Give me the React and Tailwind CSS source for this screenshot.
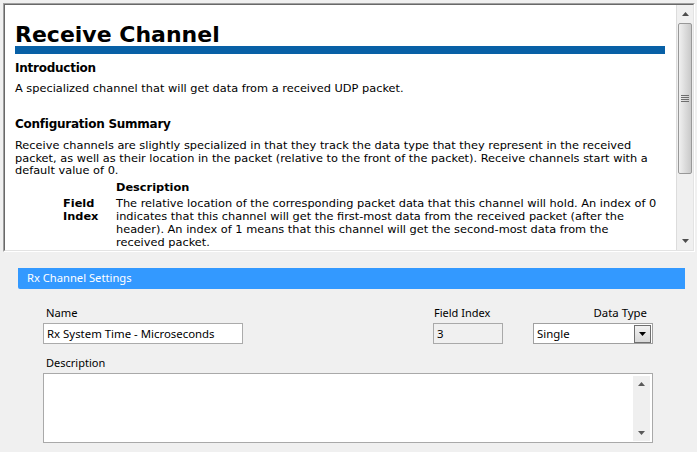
import React from 'react';

const HELP_FONT = { fontFamily: '"DejaVu Sans", Verdana, sans-serif' };
const UI_FONT = { fontFamily: '"Noto Sans", "Open Sans", sans-serif' };

const Arrow = ({ down = false, color = '#4d4d4d' }) => (
  <svg width="7" height="4" viewBox="0 0 7 4" aria-hidden="true">
    <polygon points={down ? '0,0 7,0 3.5,4' : '0,4 7,4 3.5,0'} fill={color} />
  </svg>
);

const HelpScrollbar = () => (
  <div className="flex w-[17px] flex-col border-l border-[#dcdcdc] bg-[#f0f0f0]">
    <div className="flex h-[18px] items-center justify-center">
      <Arrow />
    </div>
    <div className="mx-[1px] flex h-[151px] items-center justify-center rounded-[2px] border border-[#989898] bg-linear-to-r from-[#f0f0f0] to-[#c9c9c9]">
      <div className="flex flex-col gap-[1px]">
        <div className="h-px w-[8px] bg-[#6e6e6e]" />
        <div className="h-px w-[8px] bg-[#6e6e6e]" />
        <div className="h-px w-[8px] bg-[#6e6e6e]" />
        <div className="h-px w-[8px] bg-[#6e6e6e]" />
      </div>
    </div>
    <div className="flex-1" />
    <div className="flex h-[18px] items-center justify-center">
      <Arrow down />
    </div>
  </div>
);

const HelpPanel = () => (
  <div className="ml-[3px] mt-[3px] h-[249px] w-[692px] border border-[#a0a0a0] border-b-white border-r-white">
    <div className="flex h-full border border-[#696969] border-b-[#e3e3e3] border-r-[#e3e3e3]">
      <div className="flex-1 overflow-hidden bg-white pl-[10px] pr-[11px] pt-[18px] text-black" style={HELP_FONT}>
        <h1 className="text-[22px] font-bold leading-[23px]">Receive Channel</h1>
        <div className="h-[8px] w-full bg-[#0860a6]" />

        <h2 className="mt-[6px] text-[12px] font-bold leading-[16px] tracking-[-0.25px]">Introduction</h2>
        <p className="mt-[6px] whitespace-nowrap text-[11.35px] leading-[13px]">
          A specialized channel that will get data from a received UDP packet.
        </p>

        <h2 className="mt-[21px] text-[12px] font-bold leading-[16px] tracking-[-0.25px]">Configuration Summary</h2>
        <p className="mt-[7px] whitespace-nowrap text-[11.35px] leading-[12.5px]">
          Receive channels are slightly specialized in that they track the data type that they represent in the received
          <br />
          packet, as well as their location in the packet (relative to the front of the packet). Receive channels start with a
          <br />
          default value of 0.
        </p>

        <div className="mt-[4px] pl-[101px] text-[11.35px] font-bold leading-[13px]">Description</div>
        <div className="mt-[3px] flex text-[11.35px] leading-[13px]">
          <div className="w-[101px] shrink-0 pl-[48px] font-bold">
            Field
            <br />
            Index
          </div>
          <div className="whitespace-nowrap">
            The relative location of the corresponding packet data that this channel will hold. An index of 0
            <br />
            indicates that this channel will get the first-most data from the received packet (after the
            <br />
            header). An index of 1 means that this channel will get the second-most data from the
            <br />
            received packet.
          </div>
        </div>
      </div>
      <HelpScrollbar />
    </div>
  </div>
);

const SettingsPanel = () => (
  <div className="ml-[18px] mt-[16px] text-black" style={UI_FONT}>
    <div className="flex h-[21px] w-[667px] items-center rounded-bl-[2px] bg-[#3399ff] pl-[9px] text-[11.2px] text-white">
      Rx Channel Settings
    </div>

    <div className="ml-[25px] mt-[16px] flex items-end">
      <div className="w-[200px]">
        <div className="pl-[3px] text-[11.2px] leading-[15px]">Name</div>
        <div className="mt-[3px] h-[21px] border border-[#ababab] bg-white pl-[3px] text-[11.4px] leading-[19px]">
          Rx System Time - Microseconds
        </div>
      </div>
      <div className="ml-[190px] w-[70px]">
        <div className="pl-[1px] text-[11px] leading-[15px]">Field Index</div>
        <div className="mt-[3px] h-[21px] border border-[#a9a9a9] bg-[#f0f0f0] pl-[3px] text-[11.4px] leading-[19px]">
          3
        </div>
      </div>
      <div className="ml-[30px] w-[120px]">
        <div className="pr-[6px] text-right text-[11.4px] leading-[15px]">Data Type</div>
        <div className="mt-[3px] flex h-[21px] items-center justify-between border border-[#a0a0a0] bg-white pl-[3px] pr-[1px] text-[11.4px] leading-[19px]">
          <span>Single</span>
          <div className="flex h-[18px] w-[17px] items-center justify-center border border-[#6f6f6f] bg-linear-to-b from-[#f2f2f2] to-[#d8d8d8]">
            <Arrow down color="#000" />
          </div>
        </div>
      </div>
    </div>

    <div className="ml-[25px] mt-[11px]">
      <div className="pl-[3px] text-[11px] leading-[15px]">Description</div>
      <div className="mt-[3px] flex h-[70px] w-[610px] justify-end border border-[#a9a9a9] bg-white pb-[1px] pr-[2px] pt-[2px]">
        <div className="flex w-[17px] flex-col items-center justify-between bg-[#efefef] py-[6px]">
          <Arrow color="#5a5a5a" />
          <Arrow down color="#5a5a5a" />
        </div>
      </div>
    </div>
  </div>
);

const App = () => (
  <div className="h-[452px] w-[697px] overflow-hidden bg-[#f0f0f0]">
    <HelpPanel />
    <SettingsPanel />
  </div>
);

export default App;
